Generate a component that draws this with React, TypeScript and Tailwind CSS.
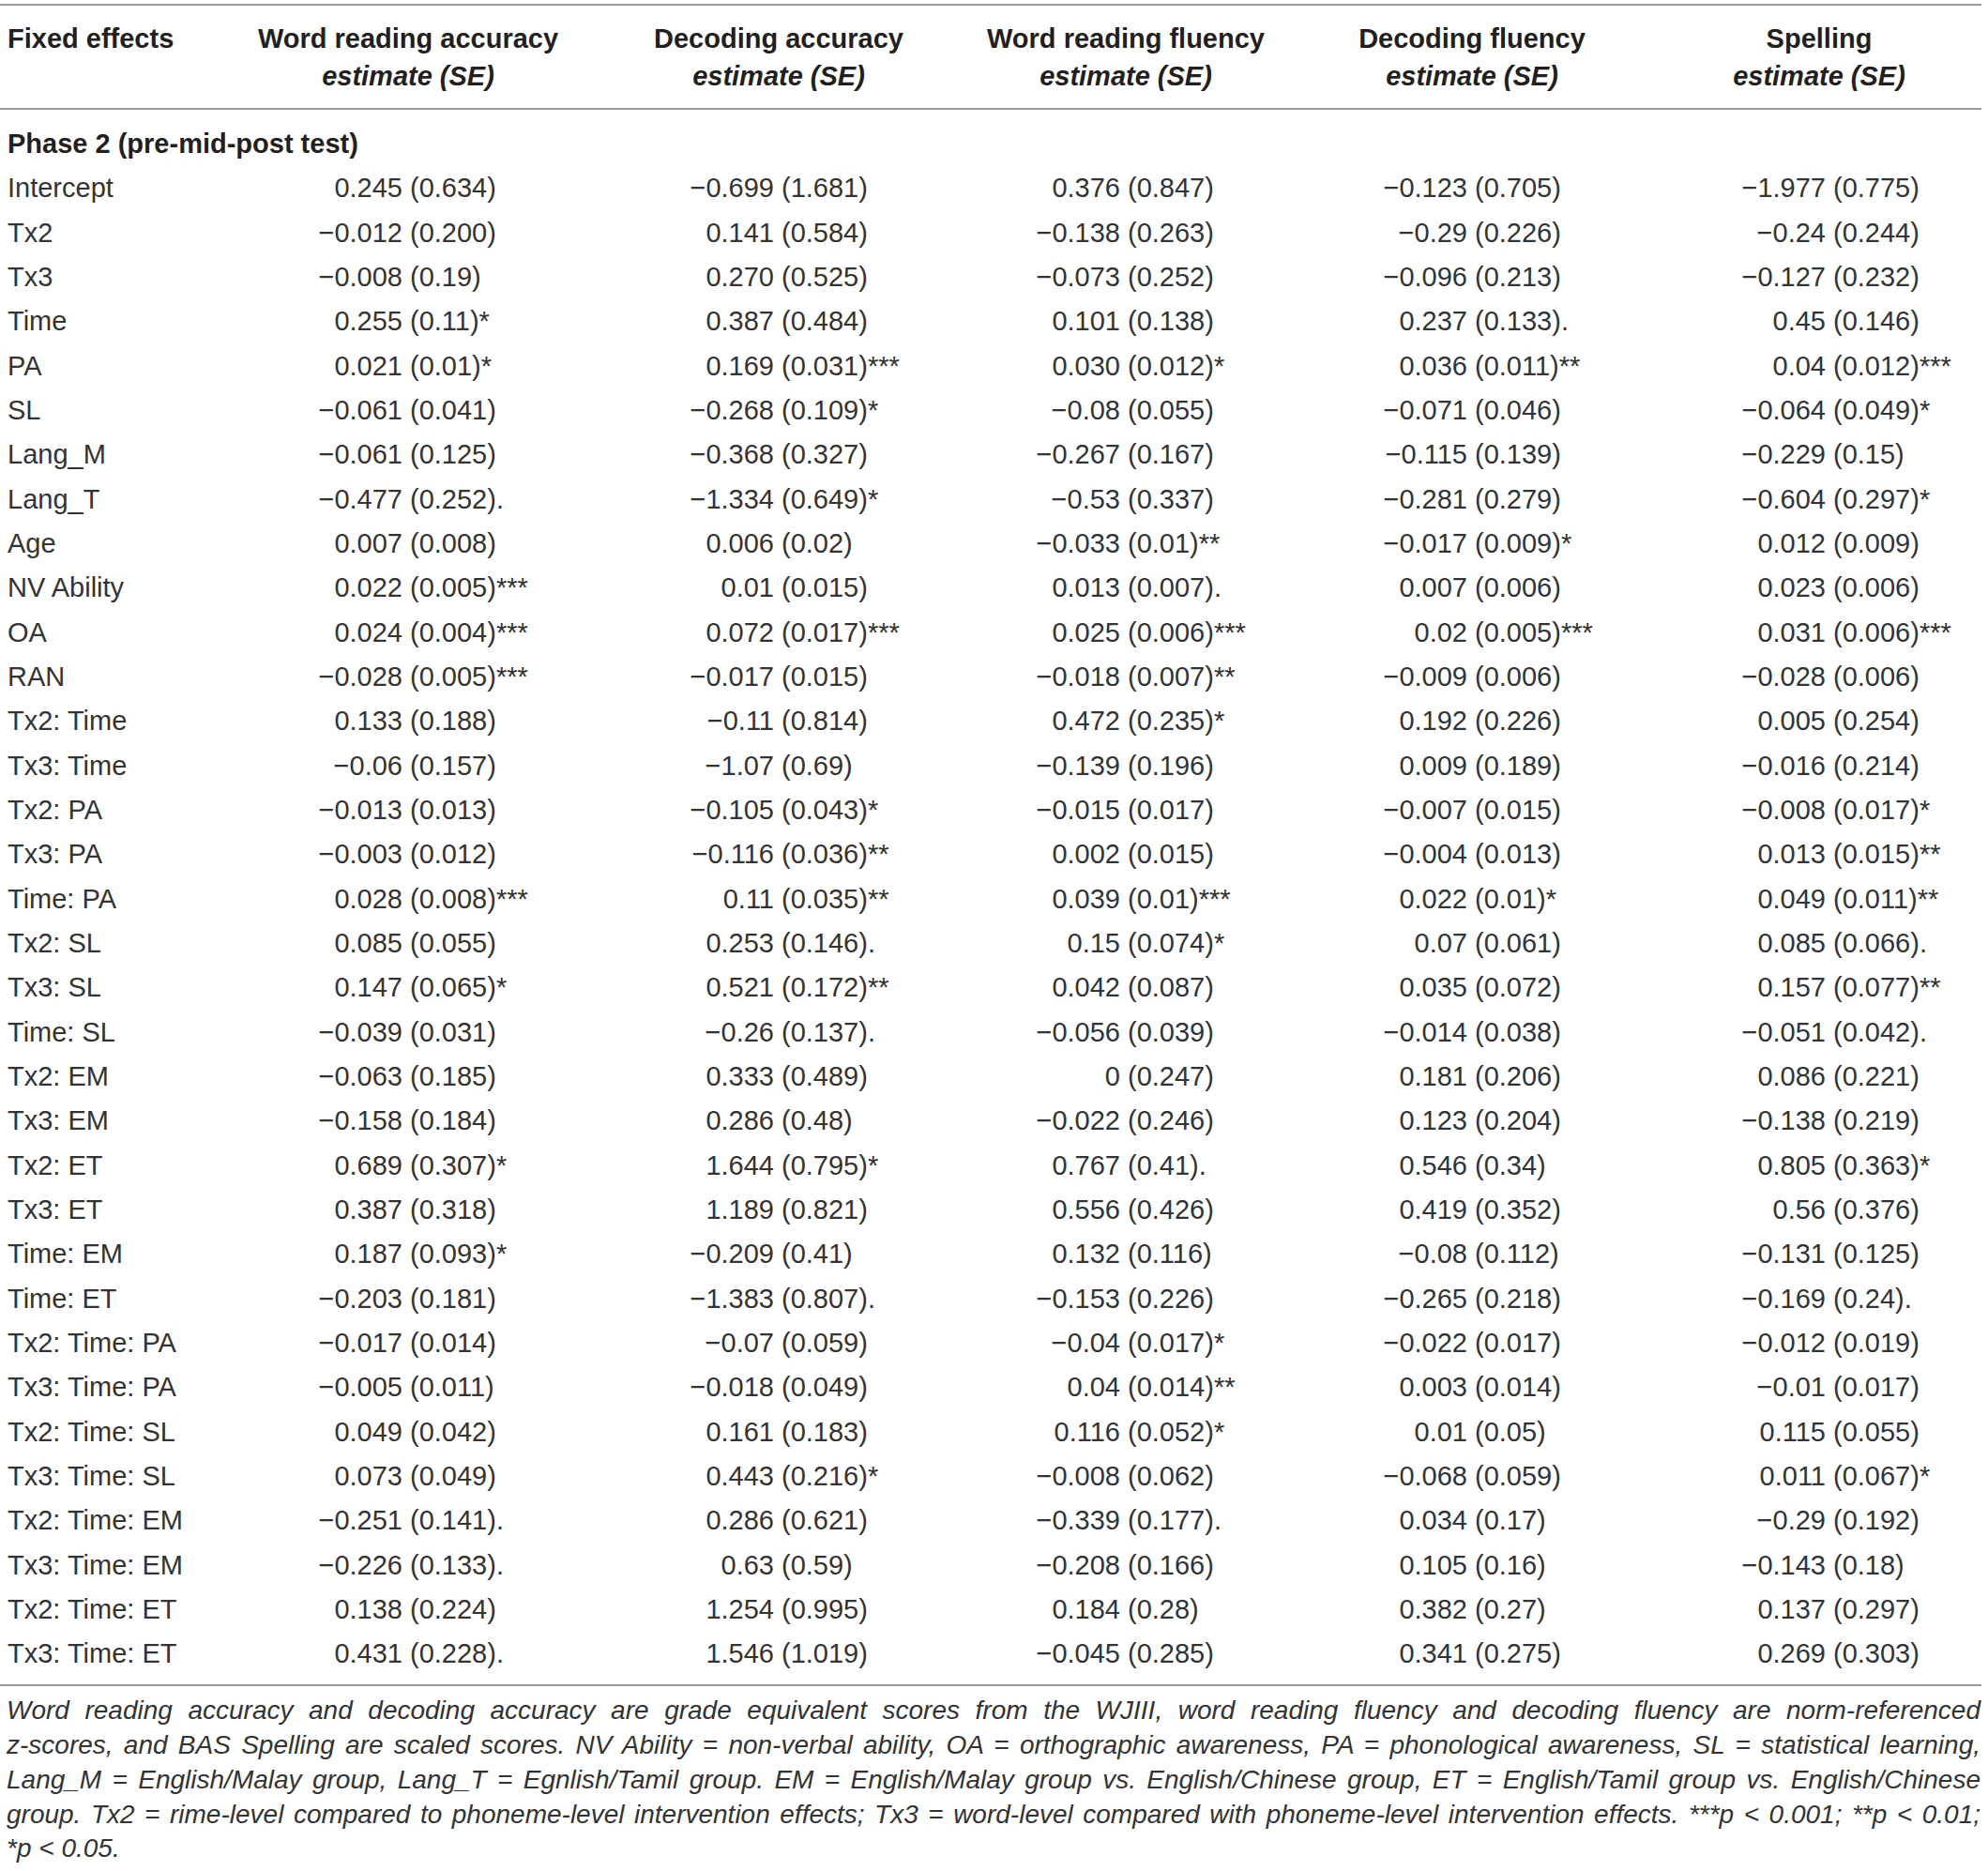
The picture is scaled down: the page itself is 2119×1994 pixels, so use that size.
import React from 'react';

type Col = { box: string; est: string };

// "(" of every value lines up inside its column
const cols: Col[] = [
  { box: 'col-start-2', est: 'w-[179px]' },
  { box: 'col-start-3', est: 'w-[205px]' },
  { box: 'col-start-4', est: 'w-[154px]' },
  { box: 'col-start-5', est: 'w-[204px]' },
  { box: 'col-start-6', est: 'w-[168px]' },
];

const headers = ['Word reading accuracy', 'Decoding accuracy', 'Word reading fluency', 'Decoding fluency', 'Spelling'];

const rows: [string, string[]][] = [
  ['Intercept', ['0.245 (0.634)', '−0.699 (1.681)', '0.376 (0.847)', '−0.123 (0.705)', '−1.977 (0.775)']],
  ['Tx2', ['−0.012 (0.200)', '0.141 (0.584)', '−0.138 (0.263)', '−0.29 (0.226)', '−0.24 (0.244)']],
  ['Tx3', ['−0.008 (0.19)', '0.270 (0.525)', '−0.073 (0.252)', '−0.096 (0.213)', '−0.127 (0.232)']],
  ['Time', ['0.255 (0.11)*', '0.387 (0.484)', '0.101 (0.138)', '0.237 (0.133).', '0.45 (0.146)']],
  ['PA', ['0.021 (0.01)*', '0.169 (0.031)***', '0.030 (0.012)*', '0.036 (0.011)**', '0.04 (0.012)***']],
  ['SL', ['−0.061 (0.041)', '−0.268 (0.109)*', '−0.08 (0.055)', '−0.071 (0.046)', '−0.064 (0.049)*']],
  ['Lang_M', ['−0.061 (0.125)', '−0.368 (0.327)', '−0.267 (0.167)', '−0.115 (0.139)', '−0.229 (0.15)']],
  ['Lang_T', ['−0.477 (0.252).', '−1.334 (0.649)*', '−0.53 (0.337)', '−0.281 (0.279)', '−0.604 (0.297)*']],
  ['Age', ['0.007 (0.008)', '0.006 (0.02)', '−0.033 (0.01)**', '−0.017 (0.009)*', '0.012 (0.009)']],
  ['NV Ability', ['0.022 (0.005)***', '0.01 (0.015)', '0.013 (0.007).', '0.007 (0.006)', '0.023 (0.006)']],
  ['OA', ['0.024 (0.004)***', '0.072 (0.017)***', '0.025 (0.006)***', '0.02 (0.005)***', '0.031 (0.006)***']],
  ['RAN', ['−0.028 (0.005)***', '−0.017 (0.015)', '−0.018 (0.007)**', '−0.009 (0.006)', '−0.028 (0.006)']],
  ['Tx2: Time', ['0.133 (0.188)', '−0.11 (0.814)', '0.472 (0.235)*', '0.192 (0.226)', '0.005 (0.254)']],
  ['Tx3: Time', ['−0.06 (0.157)', '−1.07 (0.69)', '−0.139 (0.196)', '0.009 (0.189)', '−0.016 (0.214)']],
  ['Tx2: PA', ['−0.013 (0.013)', '−0.105 (0.043)*', '−0.015 (0.017)', '−0.007 (0.015)', '−0.008 (0.017)*']],
  ['Tx3: PA', ['−0.003 (0.012)', '−0.116 (0.036)**', '0.002 (0.015)', '−0.004 (0.013)', '0.013 (0.015)**']],
  ['Time: PA', ['0.028 (0.008)***', '0.11 (0.035)**', '0.039 (0.01)***', '0.022 (0.01)*', '0.049 (0.011)**']],
  ['Tx2: SL', ['0.085 (0.055)', '0.253 (0.146).', '0.15 (0.074)*', '0.07 (0.061)', '0.085 (0.066).']],
  ['Tx3: SL', ['0.147 (0.065)*', '0.521 (0.172)**', '0.042 (0.087)', '0.035 (0.072)', '0.157 (0.077)**']],
  ['Time: SL', ['−0.039 (0.031)', '−0.26 (0.137).', '−0.056 (0.039)', '−0.014 (0.038)', '−0.051 (0.042).']],
  ['Tx2: EM', ['−0.063 (0.185)', '0.333 (0.489)', '0 (0.247)', '0.181 (0.206)', '0.086 (0.221)']],
  ['Tx3: EM', ['−0.158 (0.184)', '0.286 (0.48)', '−0.022 (0.246)', '0.123 (0.204)', '−0.138 (0.219)']],
  ['Tx2: ET', ['0.689 (0.307)*', '1.644 (0.795)*', '0.767 (0.41).', '0.546 (0.34)', '0.805 (0.363)*']],
  ['Tx3: ET', ['0.387 (0.318)', '1.189 (0.821)', '0.556 (0.426)', '0.419 (0.352)', '0.56 (0.376)']],
  ['Time: EM', ['0.187 (0.093)*', '−0.209 (0.41)', '0.132 (0.116)', '−0.08 (0.112)', '−0.131 (0.125)']],
  ['Time: ET', ['−0.203 (0.181)', '−1.383 (0.807).', '−0.153 (0.226)', '−0.265 (0.218)', '−0.169 (0.24).']],
  ['Tx2: Time: PA', ['−0.017 (0.014)', '−0.07 (0.059)', '−0.04 (0.017)*', '−0.022 (0.017)', '−0.012 (0.019)']],
  ['Tx3: Time: PA', ['−0.005 (0.011)', '−0.018 (0.049)', '0.04 (0.014)**', '0.003 (0.014)', '−0.01 (0.017)']],
  ['Tx2: Time: SL', ['0.049 (0.042)', '0.161 (0.183)', '0.116 (0.052)*', '0.01 (0.05)', '0.115 (0.055)']],
  ['Tx3: Time: SL', ['0.073 (0.049)', '0.443 (0.216)*', '−0.008 (0.062)', '−0.068 (0.059)', '0.011 (0.067)*']],
  ['Tx2: Time: EM', ['−0.251 (0.141).', '0.286 (0.621)', '−0.339 (0.177).', '0.034 (0.17)', '−0.29 (0.192)']],
  ['Tx3: Time: EM', ['−0.226 (0.133).', '0.63 (0.59)', '−0.208 (0.166)', '0.105 (0.16)', '−0.143 (0.18)']],
  ['Tx2: Time: ET', ['0.138 (0.224)', '1.254 (0.995)', '0.184 (0.28)', '0.382 (0.27)', '0.137 (0.297)']],
  ['Tx3: Time: ET', ['0.431 (0.228).', '1.546 (1.019)', '−0.045 (0.285)', '0.341 (0.275)', '0.269 (0.303)']],
];

const notes = [
  'Word reading accuracy and decoding accuracy are grade equivalent scores from the WJIII, word reading fluency and decoding fluency are norm-referenced',
  'z-scores, and BAS Spelling are scaled scores. NV Ability = non-verbal ability, OA = orthographic awareness, PA = phonological awareness, SL = statistical learning,',
  'Lang_M = English/Malay group, Lang_T = Egnlish/Tamil group. EM = English/Malay group vs. English/Chinese group, ET = English/Tamil group vs. English/Chinese',
  'group. Tx2 = rime-level compared to phoneme-level intervention effects; Tx3 = word-level compared with phoneme-level intervention effects. ***p < 0.001; **p < 0.01;',
];

const grid = 'grid grid-cols-[250px_370px_420px_320px_418px_322px]';

const Value: React.FC<{ text: string; col: Col }> = ({ text, col }) => {
  const i = text.indexOf(' (');
  return (
    <div className={`${col.box} flex whitespace-nowrap`}>
      <span className={`${col.est} text-right`}>{text.slice(0, i)}</span>
      <span className="ml-[8px]">{text.slice(i + 1)}</span>
    </div>
  );
};

export default function App() {
  return (
    <div className="h-[1994px] w-[2119px] bg-white pt-[4px] text-[#231f20] font-['Liberation_Sans',Arial,sans-serif]">
      <div className="w-[2112px]">
        <div className="h-[2px] bg-[#9a9a9a]" />
        <div className={`${grid} pt-[15px] pb-[14px] text-[29px] leading-[40px] font-bold`}>
          <div className="pl-[8px]">Fixed effects</div>
          {headers.map((h) => (
            <div key={h} className="text-center">
              <div>{h}</div>
              <div className="italic">estimate (SE)</div>
            </div>
          ))}
        </div>
        <div className="h-[2px] bg-[#9a9a9a]" />

        <div className="mt-[13px] pb-[9px] text-[29px]">
          <div className="h-[47.33px] pl-[8px] font-bold leading-[47.33px]">Phase 2 (pre-mid-post test)</div>
          {rows.map(([label, vals], r) => (
            <div key={r} className={`${grid} h-[47.33px] leading-[47.33px] text-[#333]`}>
              <div className="pl-[8px] whitespace-nowrap">{label}</div>
              {vals.map((v, c) => (
                <Value key={c} text={v} col={cols[c]} />
              ))}
            </div>
          ))}
        </div>
        <div className="h-[2px] bg-[#9a9a9a]" />
      </div>

      <div className="mt-[8px] ml-[7px] w-[2104px] text-[28px] italic leading-[36.7px] text-[#333]">
        {notes.map((n) => (
          <div key={n} className="whitespace-nowrap text-justify [text-align-last:justify]">
            {n}
          </div>
        ))}
        <div>*p &lt; 0.05.</div>
      </div>
    </div>
  );
}
